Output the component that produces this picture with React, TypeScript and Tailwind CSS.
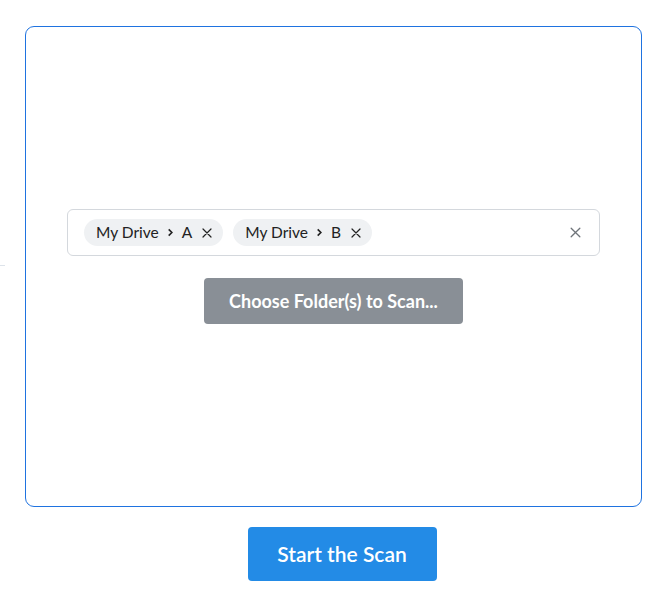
import React from "react";

function XIcon({ className }: { className?: string }) {
  return (
    <svg viewBox="0 0 24 24" className={className} fill="none" stroke="currentColor" strokeWidth="2.4" strokeLinecap="round">
      <path d="M4 4l16 16M20 4L4 20" />
    </svg>
  );
}

function Chip({ folder }: { folder: string }) {
  return (
    <span className="flex items-center h-[27px] pl-3 pr-[10px] rounded-full bg-[#eff1f3] text-[15.5px] leading-none text-[#222]">
      <span>My Drive</span>
      <svg viewBox="0 0 10 10" className="w-[9px] h-[9px] mx-[7px] text-[#222]" fill="none" stroke="currentColor" strokeWidth="1.8">
        <path d="M3 1.5L6.5 5 3 8.5" />
      </svg>
      <span>{folder}</span>
      <XIcon className="w-[12px] h-[12px] ml-[9px] text-[#222]" />
    </span>
  );
}

export default function App() {
  return (
    <div className="relative w-[667px] h-[593px] bg-white pt-[26px] pl-[25px] font-['Lato','Liberation_Sans',sans-serif]">
      <div className="absolute left-0 top-[265px] w-[5px] h-px bg-[#dde3ea]" />
      <div className="w-[617px] h-[481px] border border-[#1f73e0] rounded-[9px] flex flex-col items-center justify-center gap-[22px] px-[41px]">
        <div className="w-full h-[47px] border border-[#d4d8dd] rounded-[6px] flex items-center pl-[16px] pr-[17px] gap-[10px]">
          <Chip folder="A" />
          <Chip folder="B" />
          <XIcon className="ml-auto w-[13px] h-[13px] text-[#6f747a]" />
        </div>
        <button className="w-[259px] h-[46px] rounded-[4px] bg-[#898f96] text-white text-[18px] font-bold">
          Choose Folder(s) to Scan...
        </button>
      </div>
      <div className="flex justify-center w-[616px] mt-[20px] pl-[18px]">
        <button className="w-[189px] h-[54px] rounded-[4px] bg-[#238be6] text-white text-[21px] font-semibold">
          Start the Scan
        </button>
      </div>
    </div>
  );
}
